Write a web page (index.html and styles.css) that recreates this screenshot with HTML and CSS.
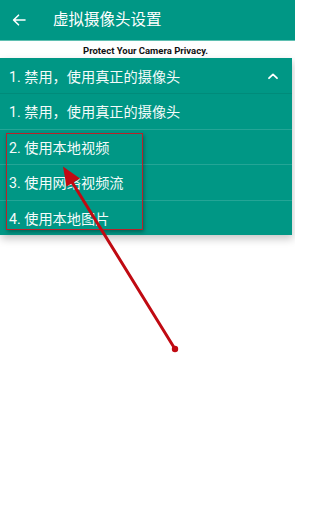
FILE: index.html
```html
<!DOCTYPE html>
<html lang="zh-CN">
<head>
<meta charset="utf-8">
<title>虚拟摄像头设置</title>
<link rel="stylesheet" href="styles.css">
</head>
<body>
<header class="appbar">
  <svg class="back" width="14" height="12" viewBox="0 0 14 12"><path d="M13 6H1.8M6.5 1.2L1.6 6l4.9 4.8" fill="none" stroke="#fff" stroke-width="1.6" stroke-linecap="round" stroke-linejoin="round"/></svg>
  <h1 class="title">虚拟摄像头设置</h1>
</header>
<p class="subtitle">Protect Your Camera Privacy.</p>
<div class="dropdown">
  <div class="selected">
    <span>1. 禁用，使用真正的摄像头</span>
    <svg class="chev" width="12" height="8" viewBox="0 0 12 8"><path d="M2 6.2L6 2.4l4 3.8" fill="none" stroke="#fff" stroke-width="1.8" stroke-linecap="round" stroke-linejoin="round"/></svg>
  </div>
  <ul class="options">
    <li>1. 禁用，使用真正的摄像头</li>
    <li>2. 使用本地视频</li>
    <li>3. 使用网络视频流</li>
    <li>4. 使用本地图片</li>
  </ul>
</div>
<div class="highlight"></div>
<svg class="pointer" width="295" height="529" viewBox="0 0 295 529">
  <line x1="175" y1="349" x2="72" y2="182" stroke="#c00a12" stroke-width="3" stroke-linecap="round"/>
  <polygon points="63,166.5 80,178.5 66.5,186.5" fill="#c00a12"/>
  <circle cx="175" cy="349" r="3.2" fill="#c00a12"/>
</svg>
</body>
</html>
```
FILE: styles.css
```css
html, body {
  margin: 0;
  padding: 0;
  background: #ffffff;
  width: 295px;
  height: 529px;
  overflow: hidden;
  font-family: Roboto, "Noto Sans CJK SC", sans-serif;
}
.appbar {
  height: 41px;
  background: #009785;
  display: flex;
  align-items: center;
  box-sizing: border-box;
  padding-left: 12px;
  border-bottom: 1px solid #5fbfb1;
}
.back {
  display: block;
}
.title {
  margin: 0 0 0 27px;
  font-size: 15.5px;
  font-weight: 400;
  color: #ffffff;
  line-height: 20px;
}
.subtitle {
  margin: 0;
  height: 17px;
  line-height: 20px;
  text-align: center;
  font-family: Roboto, sans-serif;
  font-weight: bold;
  font-size: 9.5px;
  color: #111;
  padding-right: 4px;
}
.dropdown {
  width: 292px;
  background: #009785;
  box-shadow: 1px 4px 8px rgba(0, 0, 0, 0.22);
  color: #f4fbfa;
  font-size: 14.2px;
  font-weight: 400;
}
.selected {
  height: 35px;
  display: flex;
  align-items: center;
  justify-content: space-between;
  padding: 0 13px 0 9px;
  box-sizing: border-box;
}
.options {
  list-style: none;
  margin: 0;
  padding: 0;
}
.options li {
  height: 35.5px;
  border-top: 1px solid rgba(255, 255, 255, 0.14);
  box-sizing: border-box;
  display: flex;
  align-items: center;
  padding-left: 9px;
}
.options li:first-child {
  border-top-color: rgba(0, 0, 0, 0.08);
}
.highlight {
  position: absolute;
  left: 6px;
  top: 133px;
  width: 137px;
  height: 97px;
  box-sizing: border-box;
  border: 1.6px solid #b8222a;
  box-shadow: 1px 2px 4px rgba(0, 0, 0, 0.35);
}
.pointer {
  position: absolute;
  left: 0;
  top: 0;
  pointer-events: none;
}
```
